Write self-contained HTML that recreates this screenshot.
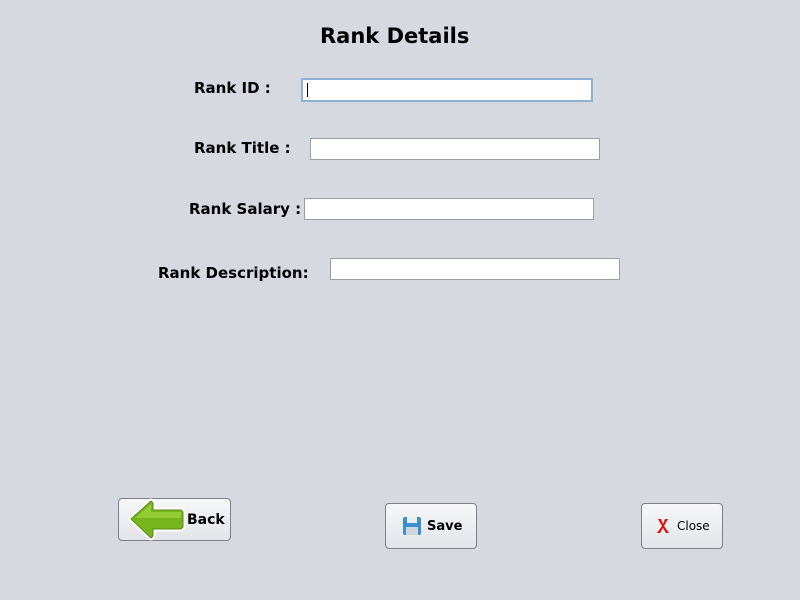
<!DOCTYPE html>
<html><head><style>
body{margin:0;width:800px;height:600px;background:#d6d9df;position:relative;overflow:hidden;font-family:"DejaVu Sans","Liberation Sans",sans-serif}
.t{position:absolute;font-weight:bold;color:#000;white-space:nowrap}
.in{position:absolute;background:#fff;border:1px solid #9a9ea6;box-sizing:border-box;height:22px}
.btn{position:absolute;box-sizing:border-box;border:1px solid #7d8088;border-radius:4px;background:linear-gradient(#f7f7f8,#e2e4e8);font-size:13px;display:flex;align-items:center}
</style></head><body>
<div class="t" style="left:320px;top:24px;font-size:21px">Rank Details</div>
<div class="t" style="left:194px;top:79px;font-size:15px">Rank ID :</div>
<div class="t" style="left:194px;top:139px;font-size:15px">Rank Title :</div>
<div class="t" style="left:189px;top:200px;font-size:15px">Rank Salary :</div>
<div class="t" style="left:158px;top:264px;font-size:15px">Rank Description:</div>
<div class="in" style="left:301px;top:78px;width:292px;height:24px;border:2px solid #8fb0d0"><div style="position:absolute;left:4px;top:3px;width:1px;height:14px;background:#000"></div></div>
<div class="in" style="left:310px;top:138px;width:290px"></div>
<div class="in" style="left:304px;top:198px;width:290px"></div>
<div class="in" style="left:330px;top:258px;width:290px"></div>
<div class="btn" style="left:118px;top:498px;width:113px;height:43px">
<svg width="64" height="44" viewBox="0 0 64 44" style="margin-left:6px;margin-top:0"><path d="M6 21 L26 3 L28 5 L28 12 L56 12 L58 14 L58 29 L56 31 L28 31 L28 38 L26 40 Z" fill="#fff" stroke="#fff" stroke-width="5" stroke-linejoin="round"/><path d="M6 21 L26 3 L28 5 L28 12 L56 12 L58 14 L58 29 L56 31 L28 31 L28 38 L26 40 Z" fill="#77b51c" stroke="#5a8a14" stroke-width="1" stroke-linejoin="round"/><path d="M10 20 L26 6 L26 14 L56 14 L56 20 Z" fill="#93cc35"/></svg>
<span style="font-weight:bold;margin-left:-2px;font-size:14px">Back</span></div>
<div class="btn" style="left:385px;top:503px;width:92px;height:46px">
<svg width="20" height="20" viewBox="0 0 20 20" style="margin-left:16px"><rect x="1" y="1" width="18" height="18" rx="2" fill="#3a8fd0"/><rect x="5" y="1" width="10" height="6" fill="#e8eef4"/><rect x="4" y="11" width="12" height="8" fill="#cfd6de"/></svg>
<span style="font-weight:bold;margin-left:5px">Save</span></div>
<div class="btn" style="left:641px;top:503px;width:82px;height:46px">
<svg width="14" height="16" viewBox="0 0 14 16" style="margin-left:14px"><path d="M2 1 L6 8 L1 15 L4 15 L7 10 L10 15 L13 15 L8 8 L12 1 L9 1 L7 6 L5 1 Z" fill="#e01010"/></svg>
<span style="margin-left:7px;font-size:12px">Close</span></div>
</body></html>
